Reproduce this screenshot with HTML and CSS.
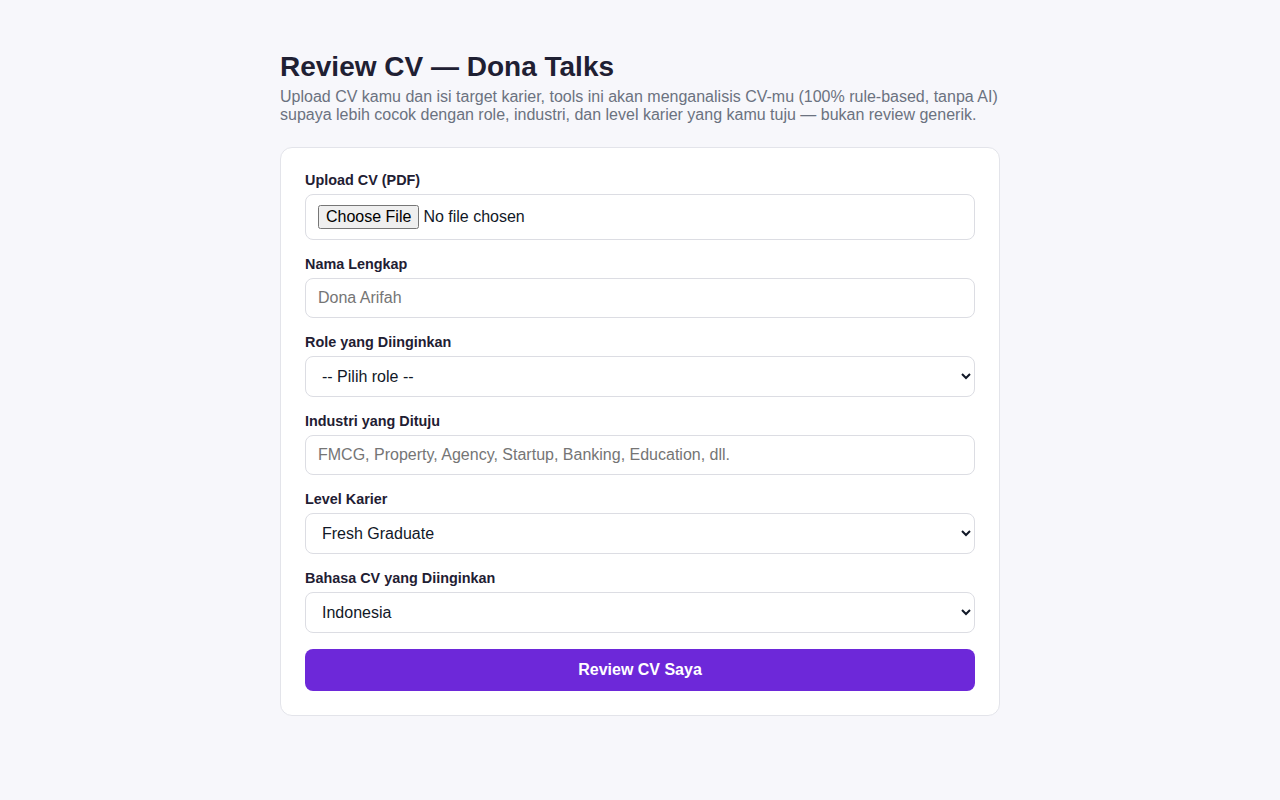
FILE: index.html
```html
<!DOCTYPE html>
<html lang="id">
<head>
<meta charset="utf-8">
<title>Review CV — Dona Talks</title>
<link rel="stylesheet" href="styles.css">
</head>
<body>
<main class="container">
  <h1 class="title">Review CV — Dona Talks</h1>
  <p class="subtitle">Upload CV kamu dan isi target karier, tools ini akan menganalisis CV-mu (100% rule-based, tanpa AI) supaya lebih cocok dengan role, industri, dan level karier yang kamu tuju — bukan review generik.</p>
  <form class="card">
    <div class="field">
      <label class="label" for="cv">Upload CV (PDF)</label>
      <input class="control file" id="cv" type="file" accept="application/pdf">
    </div>
    <div class="field">
      <label class="label" for="nama">Nama Lengkap</label>
      <input class="control" id="nama" type="text" placeholder="Dona Arifah">
    </div>
    <div class="field">
      <label class="label" for="role">Role yang Diinginkan</label>
      <select class="control" id="role">
        <option>-- Pilih role --</option>
      </select>
    </div>
    <div class="field">
      <label class="label" for="industri">Industri yang Dituju</label>
      <input class="control" id="industri" type="text" placeholder="FMCG, Property, Agency, Startup, Banking, Education, dll.">
    </div>
    <div class="field">
      <label class="label" for="level">Level Karier</label>
      <select class="control" id="level">
        <option>Fresh Graduate</option>
      </select>
    </div>
    <div class="field">
      <label class="label" for="bahasa">Bahasa CV yang Diinginkan</label>
      <select class="control" id="bahasa">
        <option>Indonesia</option>
      </select>
    </div>
    <button class="submit" type="button">Review CV Saya</button>
  </form>
</main>
</body>
</html>
```
FILE: styles.css
```css
* { box-sizing: border-box; }
html, body {
  margin: 0;
  background: #f7f7fb;
  font-family: "Liberation Sans", Arial, sans-serif;
  color: #1f2033;
}
.container {
  width: 720px;
  margin: 0 auto;
  padding-top: 51px;
}
.title {
  margin: 0 0 5px;
  font-size: 28px;
  font-weight: 700;
  line-height: 32px;
  color: #1f2033;
}
.subtitle {
  margin: 0 0 23px;
  font-size: 16px;
  line-height: 18px;
  color: #6b7280;
}
.card {
  background: #ffffff;
  border: 1px solid #e3e4ea;
  border-radius: 12px;
  padding: 24px;
}
.field {
  margin-bottom: 16px;
}
.label {
  display: block;
  font-size: 14.4px;
  font-weight: 700;
  line-height: 16px;
  margin-bottom: 6px;
  color: #1f2033;
}
.control {
  display: block;
  width: 100%;
  padding: 10px 12px;
  font-family: "Liberation Sans", Arial, sans-serif;
  font-size: 16px;
  line-height: 18px;
  color: #111827;
  background: #ffffff;
  border: 1px solid #dcdde3;
  border-radius: 8px;
}
.control::placeholder { color: #757575; }
.file {
  height: 46px;
}
select.control {
  height: 41px;
}
.submit {
  display: block;
  width: 100%;
  height: 42px;
  border: none;
  border-radius: 8px;
  background: #6d28d9;
  color: #ffffff;
  font-family: "Liberation Sans", Arial, sans-serif;
  font-size: 16px;
  font-weight: 700;
  cursor: pointer;
}
```
